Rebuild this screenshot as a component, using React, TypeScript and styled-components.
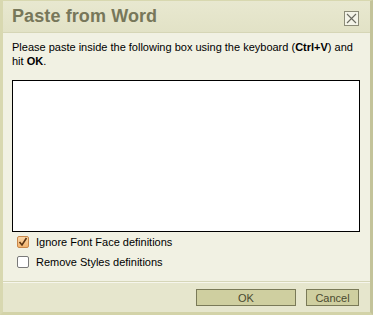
import styled, { createGlobalStyle } from "styled-components";

const GlobalStyle = createGlobalStyle`
    html, body {
        margin: 0;
        padding: 0;
        background: #f1f1e3;
    }
    body {
        font-family: "Liberation Sans", Arial, sans-serif;
    }
`;

const Dialog = styled.div`
    box-sizing: border-box;
    width: 373px;
    height: 315px;
    display: flex;
    flex-direction: column;
    background: #f1f1e3;
    border-left: 3px solid #d8d8b0;
    border-right: 3px solid #c3c39a;
    border-bottom: 3px solid #d3d3a8;
    border-top: 1px solid #d8d8b0;
`;

const TitleBar = styled.div`
    height: 31px;
    display: flex;
    align-items: center;
    justify-content: space-between;
    padding: 0 11px 0 9px;
    background: linear-gradient(#e8e8d0, #e2e2c6);
    border-bottom: 1px solid #d6d6b6;
`;

const Title = styled.h1`
    margin: 0;
    font-size: 18px;
    font-weight: bold;
    color: #77775a;
    letter-spacing: 0.1px;
`;

const CloseBox = styled.div`
    width: 13px;
    height: 13px;
    border: 1px solid #8c8c78;
    background: #f4f4e8;
    display: flex;
    align-items: center;
    justify-content: center;
    margin-top: 3px;
`;

const Body = styled.div`
    flex: 1;
    padding: 7px 10px 0 9px;
    display: flex;
    flex-direction: column;
`;

const Intro = styled.p`
    margin: 0;
    font-size: 11px;
    line-height: 14px;
    color: #000;
`;

const PasteBox = styled.div`
    margin-top: 12px;
    width: 346px;
    height: 150px;
    background: #fff;
    border: 1px solid #000;
`;

const Options = styled.div`
    display: flex;
    flex-direction: column;
    gap: 8px;
    padding: 4px 0 0 5px;
`;

const Option = styled.label`
    display: flex;
    align-items: center;
    gap: 7px;
    font-size: 11px;
    line-height: 12px;
    color: #000;
`;

const Check = styled.span<{ $on: boolean }>`
    box-sizing: border-box;
    width: 12px;
    height: 12px;
    border-radius: 2px;
    border: 1px solid ${(p) => (p.$on ? "#c8874a" : "#7a7a7a")};
    background: ${(p) => (p.$on ? "linear-gradient(#fbd7a7, #f2b46e)" : "#fff")};
    display: flex;
    align-items: center;
    justify-content: center;
`;

const Footer = styled.div`
    height: 29px;
    display: flex;
    justify-content: flex-end;
    align-items: center;
    gap: 10px;
    padding-right: 11px;
    background: #e6e6cd;
    border-top: 1px solid #f6f6ec;
    box-shadow: 0 -1px 0 #d6d6b8;
`;

const Button = styled.button<{ $w: number }>`
    box-sizing: border-box;
    width: ${(p) => p.$w}px;
    height: 17px;
    padding: 0;
    font-family: "Liberation Sans", Arial, sans-serif;
    font-size: 11px;
    color: #4a4a30;
    background: #cfcfa0;
    border: 1px solid #7a7a58;
`;

function CheckBox({ on }: { on: boolean }) {
    return (
        <Check $on={on}>
            {on && (
                <svg width="10" height="10" viewBox="0 0 10 10">
                    <path
                        d="M1.5 5 L4 8 L8.5 1"
                        fill="none"
                        stroke="#5a3413"
                        strokeWidth="1.6"
                    />
                </svg>
            )}
        </Check>
    );
}

export default function App() {
    return (
        <>
            <GlobalStyle />
            <Dialog>
                <TitleBar>
                    <Title>Paste from Word</Title>
                    <CloseBox>
                        <svg width="11" height="11" viewBox="0 0 11 11">
                            <path
                                d="M1 1 L10 10 M10 1 L1 10"
                                stroke="#6a6a60"
                                strokeWidth="1.1"
                            />
                        </svg>
                    </CloseBox>
                </TitleBar>
                <Body>
                    <Intro>
                        Please paste inside the following box using the keyboard (<b>Ctrl+V</b>) and hit <b>OK</b>.
                    </Intro>
                    <PasteBox />
                    <Options>
                        <Option>
                            <CheckBox on={true} />
                            Ignore Font Face definitions
                        </Option>
                        <Option>
                            <CheckBox on={false} />
                            Remove Styles definitions
                        </Option>
                    </Options>
                </Body>
                <Footer>
                    <Button $w={100}>OK</Button>
                    <Button $w={53}>Cancel</Button>
                </Footer>
            </Dialog>
        </>
    );
}
